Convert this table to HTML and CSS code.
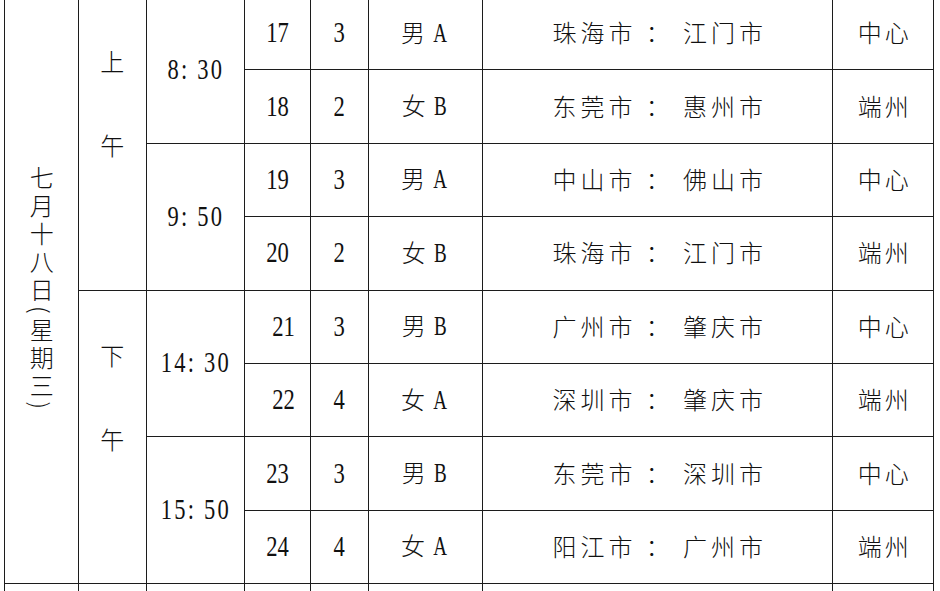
FILE: index.html
```html
<!DOCTYPE html>
<html lang="zh-CN">
<head>
<meta charset="utf-8">
<title>赛程表</title>
<link rel="stylesheet" href="styles.css">
</head>
<body>
<table class="sched">
  <colgroup>
    <col class="c-date"><col class="c-half"><col class="c-time"><col class="c-no">
    <col class="c-grp"><col class="c-cat"><col class="c-match"><col class="c-venue">
  </colgroup>
  <tr>
    <td rowspan="8" class="date"><div class="vtext">七月十八日(星期三)</div></td>
    <td rowspan="4" class="half"><div class="halfbox"><span>上</span><span>午</span></div></td>
    <td rowspan="2"><span class="lat time">8: 30</span></td>
    <td><span class="lat">17</span></td>
    <td><span class="lat">3</span></td>
    <td class="cn">男 <span class="lat">A</span></td>
    <td class="cn match">珠海市 ： 江门市</td>
    <td class="cn venue">中心</td>
  </tr>
  <tr>
    <td><span class="lat">18</span></td>
    <td><span class="lat">2</span></td>
    <td class="cn">女 <span class="lat">B</span></td>
    <td class="cn match">东莞市 ： 惠州市</td>
    <td class="cn venue">端州</td>
  </tr>
  <tr>
    <td rowspan="2"><span class="lat time">9: 50</span></td>
    <td><span class="lat">19</span></td>
    <td><span class="lat">3</span></td>
    <td class="cn">男 <span class="lat">A</span></td>
    <td class="cn match">中山市 ： 佛山市</td>
    <td class="cn venue">中心</td>
  </tr>
  <tr>
    <td><span class="lat">20</span></td>
    <td><span class="lat">2</span></td>
    <td class="cn">女 <span class="lat">B</span></td>
    <td class="cn match">珠海市 ： 江门市</td>
    <td class="cn venue">端州</td>
  </tr>
  <tr>
    <td rowspan="4" class="half"><div class="halfbox"><span>下</span><span>午</span></div></td>
    <td rowspan="2"><span class="lat time">14: 30</span></td>
    <td class="shift"><span class="lat">21</span></td>
    <td><span class="lat">3</span></td>
    <td class="cn">男 <span class="lat">B</span></td>
    <td class="cn match">广州市 ： 肇庆市</td>
    <td class="cn venue">中心</td>
  </tr>
  <tr>
    <td class="shift"><span class="lat">22</span></td>
    <td><span class="lat">4</span></td>
    <td class="cn">女 <span class="lat">A</span></td>
    <td class="cn match">深圳市 ： 肇庆市</td>
    <td class="cn venue">端州</td>
  </tr>
  <tr>
    <td rowspan="2"><span class="lat time">15: 50</span></td>
    <td><span class="lat">23</span></td>
    <td><span class="lat">3</span></td>
    <td class="cn">男 <span class="lat">B</span></td>
    <td class="cn match">东莞市 ： 深圳市</td>
    <td class="cn venue">中心</td>
  </tr>
  <tr>
    <td><span class="lat">24</span></td>
    <td><span class="lat">4</span></td>
    <td class="cn">女 <span class="lat">A</span></td>
    <td class="cn match">阳江市 ： 广州市</td>
    <td class="cn venue">端州</td>
  </tr>
  <tr class="tail">
    <td></td><td></td><td></td><td></td><td></td><td></td><td></td><td></td>
  </tr>
</table>
</body>
</html>
```
FILE: styles.css
```css
html, body {
  margin: 0;
  padding: 0;
  background: #fff;
  overflow: hidden;
  height: 591px;
}
body {
  font-family: "Noto Sans CJK SC", "Liberation Serif", sans-serif;
  color: #111;
}
.sched {
  border-collapse: collapse;
  table-layout: fixed;
  width: 930px;
  margin: -4px 0 0 4px;
}
.c-date { width: 73.5px; }
.c-half { width: 68.7px; }
.c-time { width: 98px; }
.c-no { width: 66px; }
.c-grp { width: 58px; }
.c-cat { width: 114.3px; }
.c-match { width: 349.7px; }
.c-venue { width: 101.3px; }

.sched td {
  border: 1px solid #1c1c1c;
  padding: 0 0 2px;
  text-align: center;
  vertical-align: middle;
  height: 70.4px;
}
.sched .tail td { height: 40px; }

.lat {
  display: inline-block;
  font-family: "Liberation Serif", serif;
  font-size: 29px;
  line-height: 30px;
  transform: scaleX(0.78);
}
.time {
  font-size: 30px;
  letter-spacing: 3px;
  transform: scaleX(0.75);
}
.shift { padding-left: 12px !important; }

.cn {
  font-family: "Noto Sans CJK SC", sans-serif;
  font-weight: 300;
  font-size: 24px;
  line-height: 30px;
}
.cn .lat { font-size: 28px; transform: scaleX(0.68); }
.match { letter-spacing: 4px; text-indent: 4px; }
.venue { letter-spacing: 3px; text-indent: 3px; }

.vtext {
  writing-mode: vertical-rl;
  font-family: "Noto Sans CJK SC", sans-serif;
  font-weight: 300;
  font-size: 24px;
  letter-spacing: 4px;
  margin: 0 auto;
  line-height: 24px;
}
.halfbox {
  display: flex;
  flex-direction: column;
  align-items: center;
  gap: 60px;
  padding-bottom: 78px;
  font-family: "Noto Sans CJK SC", sans-serif;
  font-weight: 300;
  font-size: 24px;
  line-height: 24px;
}
```
